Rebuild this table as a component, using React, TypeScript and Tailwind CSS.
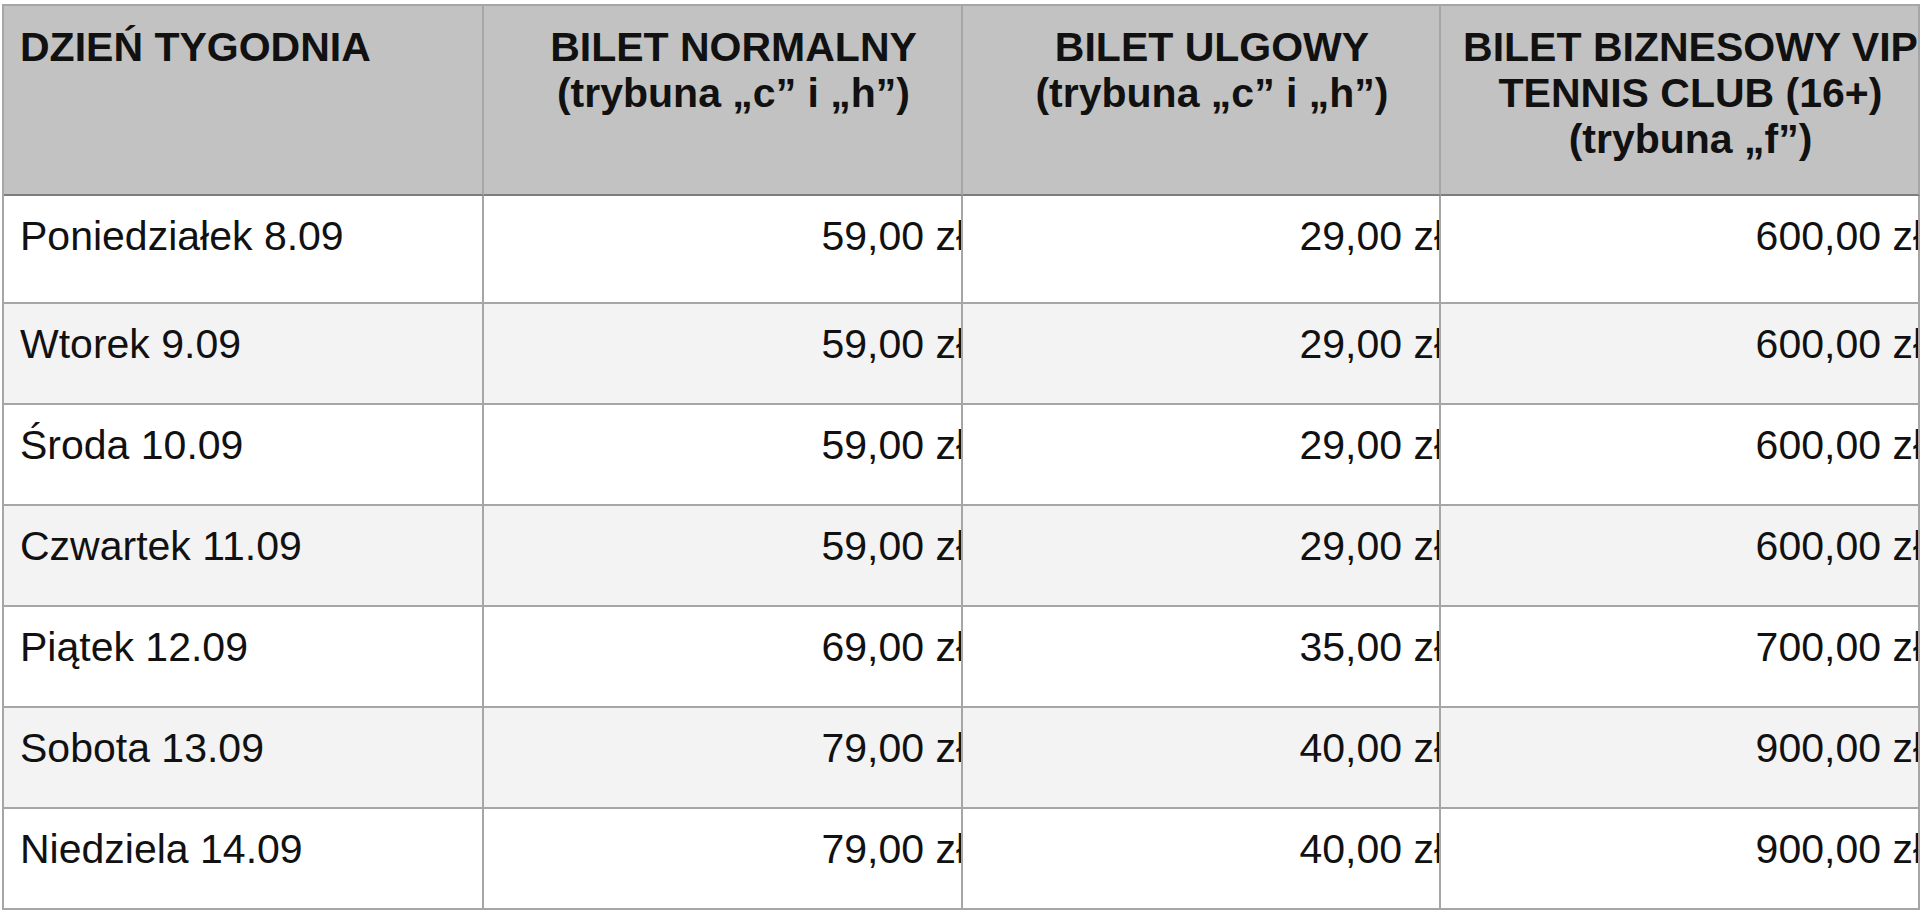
const header: { lines: string[]; align: "left" | "center" }[] = [
  { lines: ["DZIEŃ TYGODNIA"], align: "left" },
  { lines: ["BILET NORMALNY", "(trybuna „c” i „h”)"], align: "center" },
  { lines: ["BILET ULGOWY", "(trybuna „c” i „h”)"], align: "center" },
  { lines: ["BILET BIZNESOWY VIP", "TENNIS CLUB (16+)", "(trybuna „f”)"], align: "center" },
];

const rows = [
  ["Poniedziałek 8.09", "59,00 zł", "29,00 zł", "600,00 zł"],
  ["Wtorek 9.09", "59,00 zł", "29,00 zł", "600,00 zł"],
  ["Środa 10.09", "59,00 zł", "29,00 zł", "600,00 zł"],
  ["Czwartek 11.09", "59,00 zł", "29,00 zł", "600,00 zł"],
  ["Piątek 12.09", "69,00 zł", "35,00 zł", "700,00 zł"],
  ["Sobota 13.09", "79,00 zł", "40,00 zł", "900,00 zł"],
  ["Niedziela 14.09", "79,00 zł", "40,00 zł", "900,00 zł"],
];

export default function App() {
  return (
    <div
      className="min-h-screen bg-white pl-[2px] pt-[4px] text-[#111] text-[41px] leading-[46px]"
      style={{ fontFamily: '"Liberation Sans", Arial, sans-serif' }}
    >
      <div className="grid w-[1918px] grid-cols-[480px_479px_478px_479px] grid-rows-[190px_108px_101px_101px_101px_101px_101px_101px] border-l-2 border-t-2 border-[#a6a6a6]">
        {/* header */}
        {header.map((h, i) => (
          <div
            key={i}
            className="overflow-hidden border-r-2 border-b-2 border-r-[#a6a6a6] border-b-[#7d7d7d] bg-[#c1c2c1] pl-[16px] pt-[18px] font-bold"
          >
            <div className={"mr-[-6px] " + (h.align === "center" ? "text-center" : "text-left")}>
              {h.lines.map((l, j) => (
                <div key={j} className="whitespace-nowrap">
                  {l}
                </div>
              ))}
            </div>
          </div>
        ))}

        {/* body */}
        {rows.map((r, ri) =>
          r.map((c, ci) => (
            <div
              key={ri + "-" + ci}
              className={
                "overflow-hidden border-r-2 border-b-2 border-[#a6a6a6] pl-[16px] pt-[17px] " +
                (ri % 2 === 1 ? "bg-[#f3f3f3]" : "bg-white")
              }
            >
              <div className={"mr-[-4px] whitespace-nowrap " + (ci === 0 ? "text-left" : "text-right")}>{c}</div>
            </div>
          ))
        )}
      </div>
    </div>
  );
}
